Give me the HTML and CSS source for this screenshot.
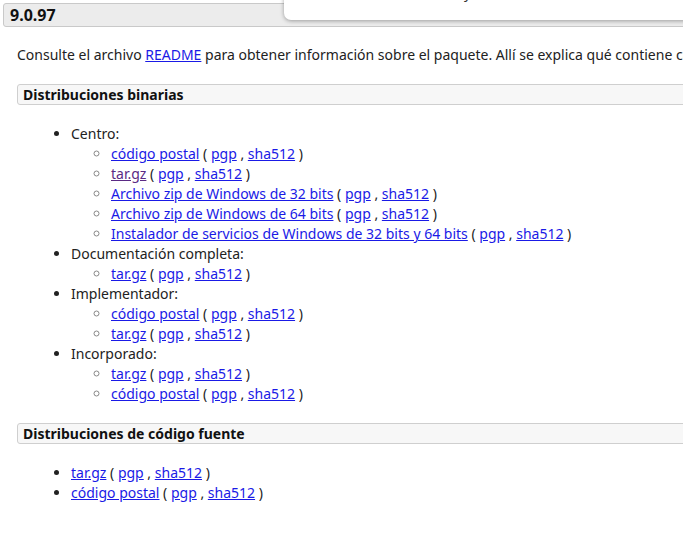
FILE: index.html
```html
<!DOCTYPE html>
<html lang="es">
<head>
<meta charset="utf-8">
<title>Tomcat 9.0.97</title>
<link rel="stylesheet" href="styles.css">
</head>
<body>
<div class="popup"><div class="popup-text"><span class="u">_</span><span class="y">y</span></div></div>
<div class="page">
  <h3 class="version">9.0.97</h3>
  <p class="intro">Consulte el archivo <a href="#">README</a> para obtener información sobre el paquete. Allí se explica qué contiene cada distribución y cómo usarla.</p>

  <div class="section">
    <h4 class="sec-title">Distribuciones binarias</h4>
    <ul class="dist">
      <li>Centro:
        <ul class="sub">
          <li><a href="#">código postal</a> ( <a href="#">pgp</a> , <a href="#">sha512</a> )</li>
          <li><a href="#" class="visited">tar.gz</a> ( <a href="#">pgp</a> , <a href="#">sha512</a> )</li>
          <li><a href="#">Archivo zip de Windows de 32 bits</a> ( <a href="#">pgp</a> , <a href="#">sha512</a> )</li>
          <li><a href="#">Archivo zip de Windows de 64 bits</a> ( <a href="#">pgp</a> , <a href="#">sha512</a> )</li>
          <li><a href="#">Instalador de servicios de Windows de 32 bits y 64 bits</a> ( <a href="#">pgp</a> , <a href="#">sha512</a> )</li>
        </ul>
      </li>
      <li>Documentación completa:
        <ul class="sub">
          <li><a href="#">tar.gz</a> ( <a href="#">pgp</a> , <a href="#">sha512</a> )</li>
        </ul>
      </li>
      <li>Implementador:
        <ul class="sub">
          <li><a href="#">código postal</a> ( <a href="#">pgp</a> , <a href="#">sha512</a> )</li>
          <li><a href="#">tar.gz</a> ( <a href="#">pgp</a> , <a href="#">sha512</a> )</li>
        </ul>
      </li>
      <li>Incorporado:
        <ul class="sub">
          <li><a href="#">tar.gz</a> ( <a href="#">pgp</a> , <a href="#">sha512</a> )</li>
          <li><a href="#">código postal</a> ( <a href="#">pgp</a> , <a href="#">sha512</a> )</li>
        </ul>
      </li>
    </ul>
  </div>

  <div class="section">
    <h4 class="sec-title">Distribuciones de código fuente</h4>
    <ul class="dist">
      <li><a href="#">tar.gz</a> ( <a href="#">pgp</a> , <a href="#">sha512</a> )</li>
      <li><a href="#">código postal</a> ( <a href="#">pgp</a> , <a href="#">sha512</a> )</li>
    </ul>
  </div>
</div>
</body>
</html>
```

FILE: styles.css
```css
html, body {
  margin: 0;
  padding: 0;
  overflow: hidden;
  background: #fff;
}
body {
  font-family: "Noto Sans", "Open Sans", sans-serif;
  font-size: 14px;
  line-height: 20px;
  color: #222;
  position: relative;
  height: 534px;
}
.page {
  width: 980px;
  padding: 3px 0 0 3px;
}
.version {
  margin: 0;
  height: 22px;
  line-height: 22px;
  font-size: 16px;
  font-weight: bold;
  padding: 0 6px;
  background: #ececec;
  border: 1px solid #c9c9c9;
  border-radius: 3px;
  color: #111;
}
.intro {
  margin: 18px 0 0 14px;
  white-space: nowrap;
}
.section {
  margin-left: 14px;
}
.sec-title {
  margin: 19px 0 0 0;
  height: 19px;
  line-height: 19px;
  font-size: 14px;
  font-weight: bold;
  padding: 0 5px;
  background: #f7f7f7;
  border: 1px solid #cfcfcf;
  border-radius: 3px;
  color: #111;
}
.dist {
  margin: 19px 0 0 0;
  padding-left: 54px;
  list-style: disc;
}
.sub {
  margin: 0;
  padding-left: 40px;
  list-style: circle;
}
.sub li::marker {
  color: #888;
}
a {
  color: #1a1ae6;
  text-decoration: underline;
}
a.visited {
  color: #5a2a84;
}
.popup {
  position: absolute;
  left: 284px;
  top: -12px;
  width: 440px;
  height: 32px;
  background: #fff;
  border-radius: 0 0 0 7px;
  box-shadow: 0 1px 4px rgba(0, 0, 0, 0.35);
  overflow: hidden;
  z-index: 2;
}
.popup-text {
  position: relative;
  height: 32px;
}
.popup-text .u {
  position: absolute;
  left: 38px;
  top: -7px;
  font-size: 14px;
  color: #333;
}
.popup-text .y {
  position: absolute;
  left: 180px;
  top: -5px;
  font-size: 14px;
  color: #333;
}
```
